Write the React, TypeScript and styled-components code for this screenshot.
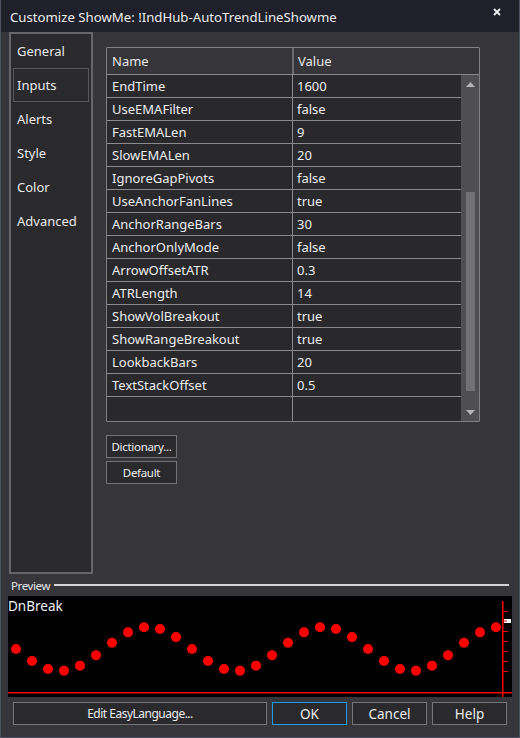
import React from "react";
import styled, { createGlobalStyle } from "styled-components";

const GlobalStyle = createGlobalStyle`
  html, body {
    margin: 0;
    padding: 0;
    background: #35353a;
  }
  body {
    font-family: "Noto Sans", "Open Sans", sans-serif;
    color: #e8e8e8;
  }
  * {
    box-sizing: border-box;
  }
`;

const tabs = ["General", "Inputs", "Alerts", "Style", "Color", "Advanced"];

const inputs = [
  ["EndTime", "1600"],
  ["UseEMAFilter", "false"],
  ["FastEMALen", "9"],
  ["SlowEMALen", "20"],
  ["IgnoreGapPivots", "false"],
  ["UseAnchorFanLines", "true"],
  ["AnchorRangeBars", "30"],
  ["AnchorOnlyMode", "false"],
  ["ArrowOffsetATR", "0.3"],
  ["ATRLength", "14"],
  ["ShowVolBreakout", "true"],
  ["ShowRangeBreakout", "true"],
  ["LookbackBars", "20"],
  ["TextStackOffset", "0.5"],
];

// preview dots follow a sine wave
const dots = Array.from({ length: 31 }, (_, i) => {
  const x = 16 + i * 16;
  const y = 649 + 22 * Math.cos((2 * Math.PI * (x - 60)) / 176);
  return { cx: x - 8, cy: y - 596 };
});

function App() {
  return (
    <>
      <GlobalStyle />
      <Window>
        <TitleBar>
          <Title>Customize ShowMe: !IndHub-AutoTrendLineShowme</Title>
          <Close>
            <svg width="8" height="8" viewBox="0 0 8 8">
              <path d="M1 1 L7 7 M7 1 L1 7" stroke="#f0f0f0" strokeWidth="1.8" />
            </svg>
          </Close>
        </TitleBar>

        <Main>
          <Nav>
            {tabs.map((t) => (
              <NavItem key={t} $active={t === "Inputs"}>{t}</NavItem>
            ))}
          </Nav>

          <Content>
            <Grid>
              <Header>
                <HeadName>Name</HeadName>
                <HeadValue>Value</HeadValue>
              </Header>
              <GridBody>
                <Rows>
                  {inputs.map(([name, value]) => (
                    <Row key={name}>
                      <NameCell>{name}</NameCell>
                      <ValueCell>{value}</ValueCell>
                    </Row>
                  ))}
                  <FillerRow>
                    <NameCell />
                    <ValueCell />
                  </FillerRow>
                </Rows>
                <Scrollbar>
                  <ScrollBtn>
                    <svg width="9" height="5" viewBox="0 0 9 5">
                      <path d="M0 5 L4.5 0 L9 5 Z" fill="#b4b4b4" />
                    </svg>
                  </ScrollBtn>
                  <Track>
                    <Thumb />
                  </Track>
                  <ScrollBtn>
                    <svg width="9" height="5" viewBox="0 0 9 5">
                      <path d="M0 0 L4.5 5 L9 0 Z" fill="#b4b4b4" />
                    </svg>
                  </ScrollBtn>
                </Scrollbar>
              </GridBody>
            </Grid>

            <SideButtons>
              <SmallButton>Dictionary...</SmallButton>
              <SmallButton>Default</SmallButton>
            </SideButtons>
          </Content>
        </Main>

        <PreviewHeader>
          <PreviewLabel>Preview</PreviewLabel>
          <PreviewRule />
        </PreviewHeader>

        <Chart>
          <ChartLabel>DnBreak</ChartLabel>
          <svg width="504" height="101" viewBox="0 0 504 101">
            {dots.map((d, i) => (
              <circle key={i} cx={d.cx} cy={d.cy} r="5" fill="#ff0000" />
            ))}
            <rect x="0" y="96" width="504" height="1.5" fill="#ff0000" />
            <rect x="494" y="5" width="1.5" height="96" fill="#ff0000" />
            {[15, 25, 35, 45, 55, 65, 75].map((y) => (
              <rect key={y} x="495" y={y} width="5" height="1" fill="#ff0000" />
            ))}
            <rect x="496" y="23" width="7" height="4" fill="#ffffff" />
            <rect x="495" y="24.5" width="4" height="1" fill="#ff0000" />
          </svg>
        </Chart>

        <Footer>
          <FooterButton $width={254} $tight>Edit EasyLanguage...</FooterButton>
          <FooterButton $width={75} $primary>OK</FooterButton>
          <FooterButton $width={75}>Cancel</FooterButton>
          <FooterButton $width={75}>Help</FooterButton>
        </Footer>
      </Window>
    </>
  );
}

const Window = styled.div`
  width: 520px;
  height: 738px;
  border: 1px solid #4b5161;
  border-top: none;
  background: #35353a;
  display: flex;
  flex-direction: column;
`;

const TitleBar = styled.div`
  height: 32px;
  background: #1f2029;
  display: flex;
  align-items: center;
  justify-content: space-between;
  padding: 0 18px 0 9px;
`;

const Title = styled.div`
  font-size: 13.2px;
  color: #ececec;
  padding-top: 1px;
`;

const Close = styled.div`
  align-self: flex-start;
  margin-top: 8px;
  display: flex;
`;

const Main = styled.div`
  display: flex;
  height: 542px;
  padding-left: 8px;
`;

const Nav = styled.div`
  width: 84px;
  border: 2px solid #666668;
  background: #2a2a2d;
  padding: 0 2px;
  display: flex;
  flex-direction: column;
`;

const NavItem = styled.div<{ $active?: boolean }>`
  height: 34px;
  display: flex;
  align-items: center;
  padding-left: 3px;
  font-size: 13px;
  color: #e8e8e8;
  border: 1px solid ${({ $active }) => ($active ? "#58585c" : "transparent")};
`;

const Content = styled.div`
  margin-left: 13px;
  padding-top: 15px;
  display: flex;
  flex-direction: column;
`;

const Grid = styled.div`
  width: 374px;
  height: 375px;
  border: 1px solid #808082;
  border-radius: 1px;
  display: flex;
  flex-direction: column;
`;

const Header = styled.div`
  height: 27px;
  display: flex;
  border-bottom: 1px solid #8a8a8c;
  font-size: 13px;
`;

const HeadName = styled.div`
  width: 187px;
  border-right: 2px solid #6c6c6e;
  padding-left: 5px;
  display: flex;
  align-items: center;
`;

const HeadValue = styled.div`
  flex: 1;
  padding-left: 4px;
  display: flex;
  align-items: center;
`;

const GridBody = styled.div`
  flex: 1;
  display: flex;
`;

const Rows = styled.div`
  flex: 1;
  display: flex;
  flex-direction: column;
  background: #29292c;
`;

const Row = styled.div`
  height: 23px;
  display: flex;
  border-bottom: 1px solid #8a8a8c;
  font-size: 13px;
  color: #ececec;
`;

const FillerRow = styled.div`
  flex: 1;
  display: flex;
`;

const NameCell = styled.div`
  width: 186px;
  border-right: 1px solid #8a8a8c;
  padding-left: 5px;
  display: flex;
  align-items: center;
`;

const ValueCell = styled.div`
  flex: 1;
  padding-left: 4px;
  display: flex;
  align-items: center;
`;

const Scrollbar = styled.div`
  width: 18px;
  background: #4f4f53;
  display: flex;
  flex-direction: column;
`;

const ScrollBtn = styled.div`
  height: 18px;
  display: flex;
  align-items: center;
  justify-content: center;
`;

const Track = styled.div`
  flex: 1;
  display: flex;
  justify-content: center;
`;

const Thumb = styled.div`
  width: 9px;
  height: 199px;
  margin-top: 99px;
  background: #727276;
`;

const SideButtons = styled.div`
  margin-top: 13px;
  display: flex;
  flex-direction: column;
  gap: 3px;
`;

const SmallButton = styled.div`
  width: 71px;
  height: 23px;
  background: #2a2a2d;
  border: 1px solid #737375;
  display: flex;
  align-items: center;
  justify-content: center;
  font-size: 11.5px;
  letter-spacing: -0.3px;
  color: #ececec;
`;

const PreviewHeader = styled.div`
  height: 22px;
  display: flex;
  align-items: center;
  padding: 0 10px 0 10px;
  gap: 4px;
`;

const PreviewLabel = styled.div`
  font-size: 11.5px;
  letter-spacing: -0.4px;
  color: #e4e4e4;
`;

const PreviewRule = styled.div`
  flex: 1;
  height: 2px;
  background: #d4d4d4;
`;

const Chart = styled.div`
  position: relative;
  margin-left: 7px;
  width: 504px;
  height: 101px;
  background: #000;

  svg {
    display: block;
  }
`;

const ChartLabel = styled.div`
  position: absolute;
  left: 0;
  top: 1px;
  font-size: 13.5px;
  color: #f4f4f4;
`;

const Footer = styled.div`
  display: flex;
  gap: 5px;
  margin-top: 5px;
  padding-left: 12px;
`;

const FooterButton = styled.div<{ $width: number; $primary?: boolean; $tight?: boolean }>`
  width: ${({ $width }) => $width}px;
  height: 23px;
  background: #2a2a2d;
  border: 1px solid ${({ $primary }) => ($primary ? "#1a9cf0" : "#767678")};
  display: flex;
  align-items: center;
  justify-content: center;
  font-size: ${({ $tight }) => ($tight ? "12px" : "13.5px")};
  letter-spacing: ${({ $tight }) => ($tight ? "-0.5px" : "0")};
  color: #ececec;
`;

export default App;
